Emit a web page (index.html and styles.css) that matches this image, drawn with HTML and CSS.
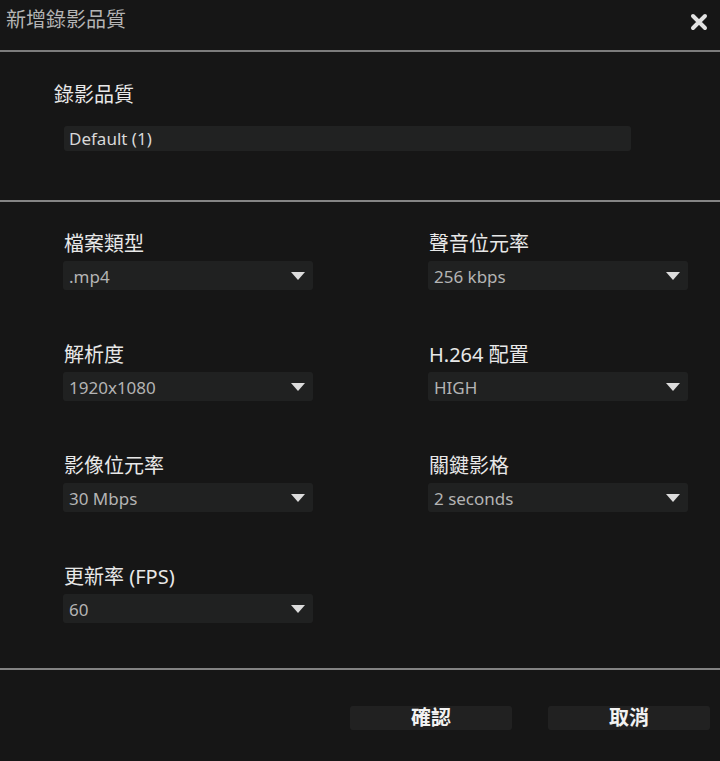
FILE: index.html
```html
<!DOCTYPE html>
<html lang="zh-Hant">
<head>
<meta charset="utf-8">
<title>新增錄影品質</title>
<link rel="stylesheet" href="styles.css">
</head>
<body>
<div class="dialog">
  <header class="titlebar">
    <span class="title">新增錄影品質</span>
    <button class="close" aria-label="close">
      <svg width="18" height="18" viewBox="0 0 18 18"><path d="M3 3L15 15M15 3L3 15" stroke="#e2e2e2" stroke-width="4" stroke-linecap="round"/></svg>
    </button>
  </header>

  <section class="name-section">
    <div class="label">錄影品質</div>
    <div class="textbox">Default (1)</div>
  </section>

  <section class="settings">
    <div class="field">
      <div class="label">檔案類型</div>
      <div class="select"><span>.mp4</span><svg class="arrow" width="14" height="8" viewBox="0 0 14 8"><path d="M0 0H14L7 8Z" fill="#dcdcdc"/></svg></div>
    </div>
    <div class="field wide">
      <div class="label">聲音位元率</div>
      <div class="select"><span>256 kbps</span><svg class="arrow" width="14" height="8" viewBox="0 0 14 8"><path d="M0 0H14L7 8Z" fill="#dcdcdc"/></svg></div>
    </div>
    <div class="field">
      <div class="label">解析度</div>
      <div class="select"><span>1920x1080</span><svg class="arrow" width="14" height="8" viewBox="0 0 14 8"><path d="M0 0H14L7 8Z" fill="#dcdcdc"/></svg></div>
    </div>
    <div class="field wide">
      <div class="label">H.264 配置</div>
      <div class="select"><span>HIGH</span><svg class="arrow" width="14" height="8" viewBox="0 0 14 8"><path d="M0 0H14L7 8Z" fill="#dcdcdc"/></svg></div>
    </div>
    <div class="field">
      <div class="label">影像位元率</div>
      <div class="select"><span>30 Mbps</span><svg class="arrow" width="14" height="8" viewBox="0 0 14 8"><path d="M0 0H14L7 8Z" fill="#dcdcdc"/></svg></div>
    </div>
    <div class="field wide">
      <div class="label">關鍵影格</div>
      <div class="select"><span>2 seconds</span><svg class="arrow" width="14" height="8" viewBox="0 0 14 8"><path d="M0 0H14L7 8Z" fill="#dcdcdc"/></svg></div>
    </div>
    <div class="field">
      <div class="label">更新率 (FPS)</div>
      <div class="select"><span>60</span><svg class="arrow" width="14" height="8" viewBox="0 0 14 8"><path d="M0 0H14L7 8Z" fill="#dcdcdc"/></svg></div>
    </div>
  </section>

  <footer class="actions">
    <button class="btn">確認</button>
    <button class="btn">取消</button>
  </footer>
</div>
</body>
</html>
```

FILE: styles.css
```css
html, body {
  margin: 0;
  padding: 0;
  background: #161616;
}

body {
  font-family: "Noto Sans", "Noto Sans CJK TC", sans-serif;
  color: #e6e6e6;
}

.dialog {
  width: 720px;
  height: 761px;
  display: flex;
  flex-direction: column;
}

.titlebar {
  height: 52px;
  box-sizing: border-box;
  border-bottom: 2px solid #7c7c7c;
  display: flex;
  justify-content: space-between;
  align-items: flex-start;
  padding: 0 12px 0 6px;
}

.title {
  font-size: 20px;
  line-height: 24px;
  margin-top: 8px;
  color: #b4b4b4;
}

.close {
  background: none;
  border: none;
  padding: 0;
  margin-top: 13px;
  width: 18px;
  height: 18px;
  display: flex;
}

.label {
  font-size: 20px;
  line-height: 24px;
  color: #e8e8e8;
  height: 24px;
}

.name-section {
  height: 150px;
  box-sizing: border-box;
  border-bottom: 2px solid #858585;
  padding: 31px 0 0 54px;
}

.textbox {
  margin: 19px 0 0 10px;
  width: 567px;
  height: 25px;
  box-sizing: border-box;
  background: #212222;
  border-radius: 3px;
  padding-left: 5px;
  font-size: 17px;
  line-height: 25px;
  color: #d8d8d8;
}

.settings {
  height: 468px;
  box-sizing: border-box;
  border-bottom: 2px solid #838383;
  padding: 30px 0 0 63px;
  display: grid;
  grid-template-columns: 250px 260px;
  grid-auto-rows: 58px;
  column-gap: 115px;
  row-gap: 53px;
  align-content: start;
}

.field {
  display: flex;
  flex-direction: column;
}

.field .label {
  margin-left: 1px;
  margin-bottom: 5px;
}

.select {
  height: 29px;
  box-sizing: border-box;
  background: #202121;
  border-radius: 3px;
  display: flex;
  align-items: center;
  justify-content: space-between;
  padding: 1px 8px 0 6px;
  font-size: 17px;
  color: #b4b4b4;
}

.actions {
  flex: 1;
  display: flex;
  justify-content: flex-end;
  align-items: flex-start;
  gap: 36px;
  padding: 36px 10px 0 0;
}

.btn {
  width: 162px;
  height: 24px;
  border: none;
  border-radius: 3px;
  background: #212121;
  color: #f2f2f2;
  font-family: "Noto Sans", "Noto Sans CJK TC", sans-serif;
  font-size: 20px;
  font-weight: bold;
  line-height: 24px;
  padding: 0;
}
```
